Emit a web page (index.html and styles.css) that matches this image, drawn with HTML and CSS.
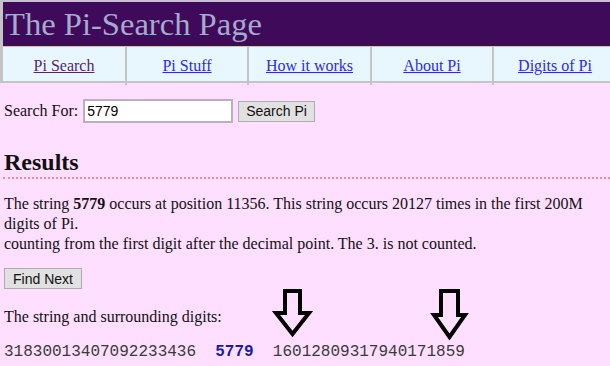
FILE: index.html
```html
<!DOCTYPE html>
<html lang="en">
<head>
  <meta charset="UTF-8" />
  <title>The Pi-Search Page</title>
  <link rel="stylesheet" href="styles.css">
</head>
<body>

  <div class="masthead">
    <div class="title">The Pi-Search Page</div>
    <div class="nav">
      <a class="visited" href="#">Pi Search</a>
      <a href="#">Pi Stuff</a>
      <a href="#">How it works</a>
      <a href="#">About Pi</a>
      <a href="#">Digits of Pi</a>
    </div>
  </div>

  <div class="content">
    <form class="search">
      <label for="q">Search For:</label>
      <input id="q" type="text" value="5779">
      <button type="button">Search Pi</button>
    </form>

    <h2 class="results">Results</h2>

    <p class="summary">The string <b>5779</b> occurs at position 11356. This string occurs 20127 times in the first 200M digits of Pi.<br>
    counting from the first digit after the decimal point. The 3. is not counted.</p>

    <button type="button" class="next">Find Next</button>

    <p class="label">The string and surrounding digits:</p>
    <div class="digits">31830013407092233436  <b>5779</b>  16012809317940171859</div>

    <!-- annotation arrows -->
    <svg class="arrow arrow-one" width="46" height="58" viewBox="0 0 46 58">
      <path d="M15 5 H30 V27 H39 L22.5 48 L6 27 H15 Z" fill="none" stroke="#000" stroke-width="4"/>
    </svg>
    <svg class="arrow arrow-two" width="42" height="58" viewBox="0 0 42 58">
      <path d="M11 5 H28 V29 H35 L19.5 51 L4 29 H11 Z" fill="none" stroke="#000" stroke-width="4"/>
    </svg>
  </div>

</body>
</html>
```

FILE: styles.css
```css
:root {
  --pink: #ffdfff;
  --purple: #400a5a;
  --navbg: #e8f7fe;
  --rule: #c4c4c4;
}

body {
  margin: 0;
  background: var(--pink);
  font-family: 'Liberation Serif', 'Times New Roman', serif;
  font-size: 16px;
  color: #111;
  overflow: hidden;
}

.masthead {
  width: 620px;
  border-top: 2px solid var(--rule);
  border-left: 3px solid var(--rule);
}

.title {
  background: var(--purple);
  color: #a4abcf;
  font-size: 32.6px;
  height: 44px;
  line-height: 45px;
  padding-left: 2px;
}

.nav {
  display: grid;
  grid-template-columns: 124px 122px 123px 122px 124px;
  background: var(--navbg);
  border-top: 1px solid var(--rule);
  border-bottom: 2px solid var(--rule);
  height: 34px;
}

.nav a {
  border-right: 2px solid var(--rule);
  color: #2a2af0;
  text-align: center;
  line-height: 38px;
}

.nav a.visited {
  color: #55256e;
}

.content {
  position: relative;
  padding: 16px 4px 0;
}

.search {
  display: flex;
  align-items: center;
  gap: 4px;
  margin: 0;
}

.search label {
  margin-right: 1px;
}

.search input {
  width: 142px;
  height: 18px;
  padding: 1px 2px;
  border: 2px solid #b8b0bc;
  font-family: 'Liberation Sans', Arial, sans-serif;
  font-size: 14px;
  margin: 0;
}

button {
  font-family: 'Liberation Sans', Arial, sans-serif;
  font-size: 14px;
  background: #e1e1e1;
  border: 1px solid #adadad;
  color: #111;
  padding: 1px 7px;
  height: 21px;
  margin: 0 0 0 1px;
}

.results {
  font-size: 24px;
  margin: 25px 0 0;
  padding-bottom: 3px;
  line-height: 28px;
}

.results::after {
  content: "";
  display: block;
  margin: 1px -4px 0 -1px;
  border-bottom: 2px dotted #f48a9a;
}

.summary {
  margin: 12px 0 0;
  line-height: 20px;
}

.next {
  margin: 14px 0 0 0;
  width: 78px;
  padding: 1px 4px;
}

.label {
  margin: 19px 0 0;
}

.digits {
  margin-top: 17px;
  font-family: 'Liberation Mono', 'Courier New', monospace;
  font-size: 16px;
  color: #3a3a3a;
  white-space: pre;
}

.digits b {
  color: #1a1aa8;
}

.arrow {
  position: absolute;
}

.arrow-one {
  left: 270px;
  top: 203px;
}

.arrow-two {
  left: 430px;
  top: 203px;
}
```
